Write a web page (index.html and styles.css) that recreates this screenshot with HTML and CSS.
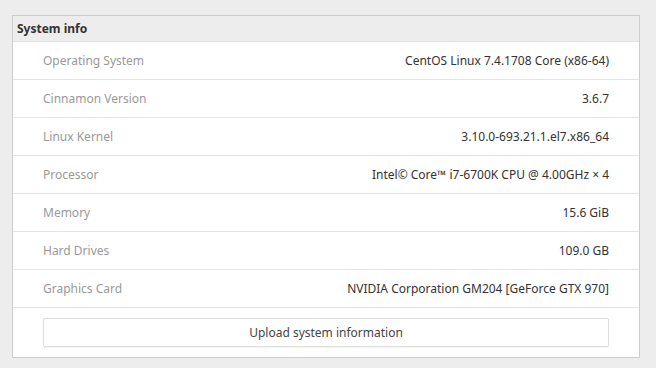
FILE: index.html
```html
<!DOCTYPE html>
<html>
<head>
<meta charset="utf-8">
<link rel="stylesheet" href="styles.css">
</head>
<body>
<div class="frame">
  <div class="header">System info</div>
  <div class="row"><span class="label">Operating System</span><span class="value">CentOS Linux 7.4.1708 Core (x86-64)</span></div>
  <div class="row"><span class="label">Cinnamon Version</span><span class="value">3.6.7</span></div>
  <div class="row"><span class="label">Linux Kernel</span><span class="value">3.10.0-693.21.1.el7.x86_64</span></div>
  <div class="row"><span class="label">Processor</span><span class="value">Intel© Core™ i7-6700K CPU @ 4.00GHz × 4</span></div>
  <div class="row"><span class="label">Memory</span><span class="value">15.6 GiB</span></div>
  <div class="row"><span class="label">Hard Drives</span><span class="value">109.0 GB</span></div>
  <div class="row"><span class="label">Graphics Card</span><span class="value">NVIDIA Corporation GM204 [GeForce GTX 970]</span></div>
  <div class="footer"><button class="upload">Upload system information</button></div>
</div>
</body>
</html>
```
FILE: styles.css
```css
html, body {
  margin: 0;
  padding: 0;
  background: #ededed;
}
body {
  padding: 15px 0 0 12px;
  font-family: "Noto Sans", sans-serif;
  font-size: 12px;
}
.frame {
  width: 626px;
  border: 1px solid #cdcdcd;
  background: #ffffff;
}
.header {
  height: 25px;
  line-height: 25px;
  padding-left: 4px;
  background: #ededed;
  font-weight: bold;
  color: #333333;
  font-size: 12px;
  border-bottom: 1px solid #e4e4e4;
}
.row {
  display: flex;
  justify-content: space-between;
  align-items: center;
  height: 37px;
  padding: 0 30px 0 30px;
  border-bottom: 1px solid #e4e4e4;
}
.label {
  color: #999999;
}
.value {
  color: #333333;
}
.footer {
  padding: 10px 30px;
}
.upload {
  display: block;
  width: 100%;
  height: 29px;
  margin: 0;
  padding: 0;
  background: #ffffff;
  border: 1px solid #dcdcdc;
  border-radius: 2px;
  box-shadow: 0 1px 0 rgba(0,0,0,0.04);
  font-family: "Noto Sans", sans-serif;
  font-size: 12px;
  color: #444444;
}
```
